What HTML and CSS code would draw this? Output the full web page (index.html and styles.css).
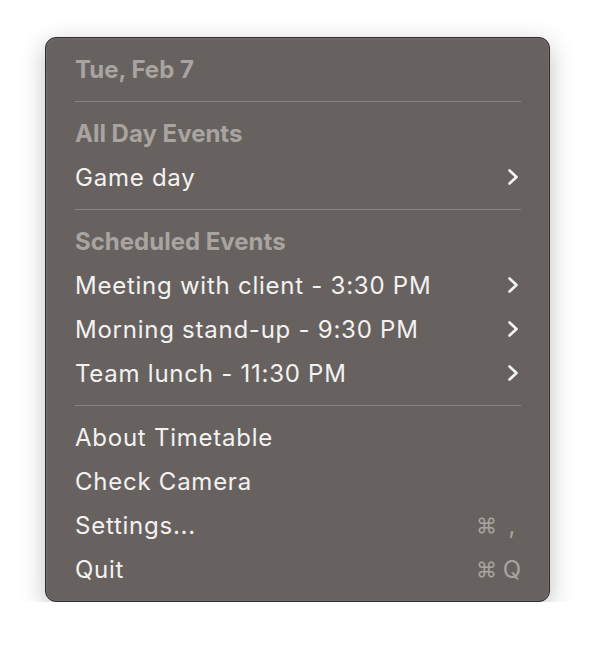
FILE: index.html
```html
<!DOCTYPE html>
<html>
    <head>
        <title>Timetable</title>
        <link rel="stylesheet" href="styles.css">
    </head>
    <body>
        <div class="menu">
            <div class="row heading">Tue, Feb 7</div>
            <div class="sep"></div>
            <div class="row heading">All Day Events</div>
            <div class="row item">
                <span>Game day</span>
                <svg class="chevron" viewBox="0 0 12 18"><path d="M2.5 2.5 L9.5 9 L2.5 15.5"/></svg>
            </div>
            <div class="sep"></div>
            <div class="row heading">Scheduled Events</div>
            <div class="row item">
                <span>Meeting with client - 3:30 PM</span>
                <svg class="chevron" viewBox="0 0 12 18"><path d="M2.5 2.5 L9.5 9 L2.5 15.5"/></svg>
            </div>
            <div class="row item">
                <span>Morning stand-up - 9:30 PM</span>
                <svg class="chevron" viewBox="0 0 12 18"><path d="M2.5 2.5 L9.5 9 L2.5 15.5"/></svg>
            </div>
            <div class="row item">
                <span>Team lunch - 11:30 PM</span>
                <svg class="chevron" viewBox="0 0 12 18"><path d="M2.5 2.5 L9.5 9 L2.5 15.5"/></svg>
            </div>
            <div class="sep"></div>
            <div class="row item"><span>About Timetable</span></div>
            <div class="row item"><span>Check Camera</span></div>
            <div class="row item">
                <span>Settings...</span>
                <span class="shortcut"><span class="cmd">⌘</span><span class="key">,</span></span>
            </div>
            <div class="row item">
                <span>Quit</span>
                <span class="shortcut"><span class="cmd">⌘</span><span class="key">Q</span></span>
            </div>
        </div>
    </body>
</html>
```

FILE: styles.css
```css
body{
    margin:0;
    background:#ffffff;
    font-family:Inter, "Noto Sans", sans-serif;
}
.menu{
    box-sizing:border-box;
    width:505px;
    margin-left:45px;
    margin-top:37px;
    padding:9px 28px 10px 29px;
    background:#67625f;
    border:1px solid #2f2d2c;
    border-radius:11px;
    box-shadow:0 0 0 1px rgba(255,255,255,0.07) inset, 0 7px 24px rgba(0,0,0,0.25);
}
.row{
    height:44px;
    display:flex;
    align-items:center;
    justify-content:space-between;
    font-size:24px;
}
.heading{
    color:#a8a4a1;
    font-weight:700;
}
.item{
    color:#f3f2f1;
    letter-spacing:0.75px;
}
.sep{
    height:1px;
    margin:10px 0 9px 0;
    background:#8a8582;
}
.chevron{
    width:12px;
    height:18px;
    margin-right:2px;
}
.chevron path{
    fill:none;
    stroke:#f5f5f5;
    stroke-width:2.6;
    stroke-linecap:round;
    stroke-linejoin:round;
}
.shortcut{
    display:flex;
    align-items:center;
    color:#a8a4a1;
    letter-spacing:0;
    margin-right:-2px;
}
.cmd{
    font-size:21px;
    margin-right:4px;
}
.key{
    width:22px;
    text-align:center;
}
```
